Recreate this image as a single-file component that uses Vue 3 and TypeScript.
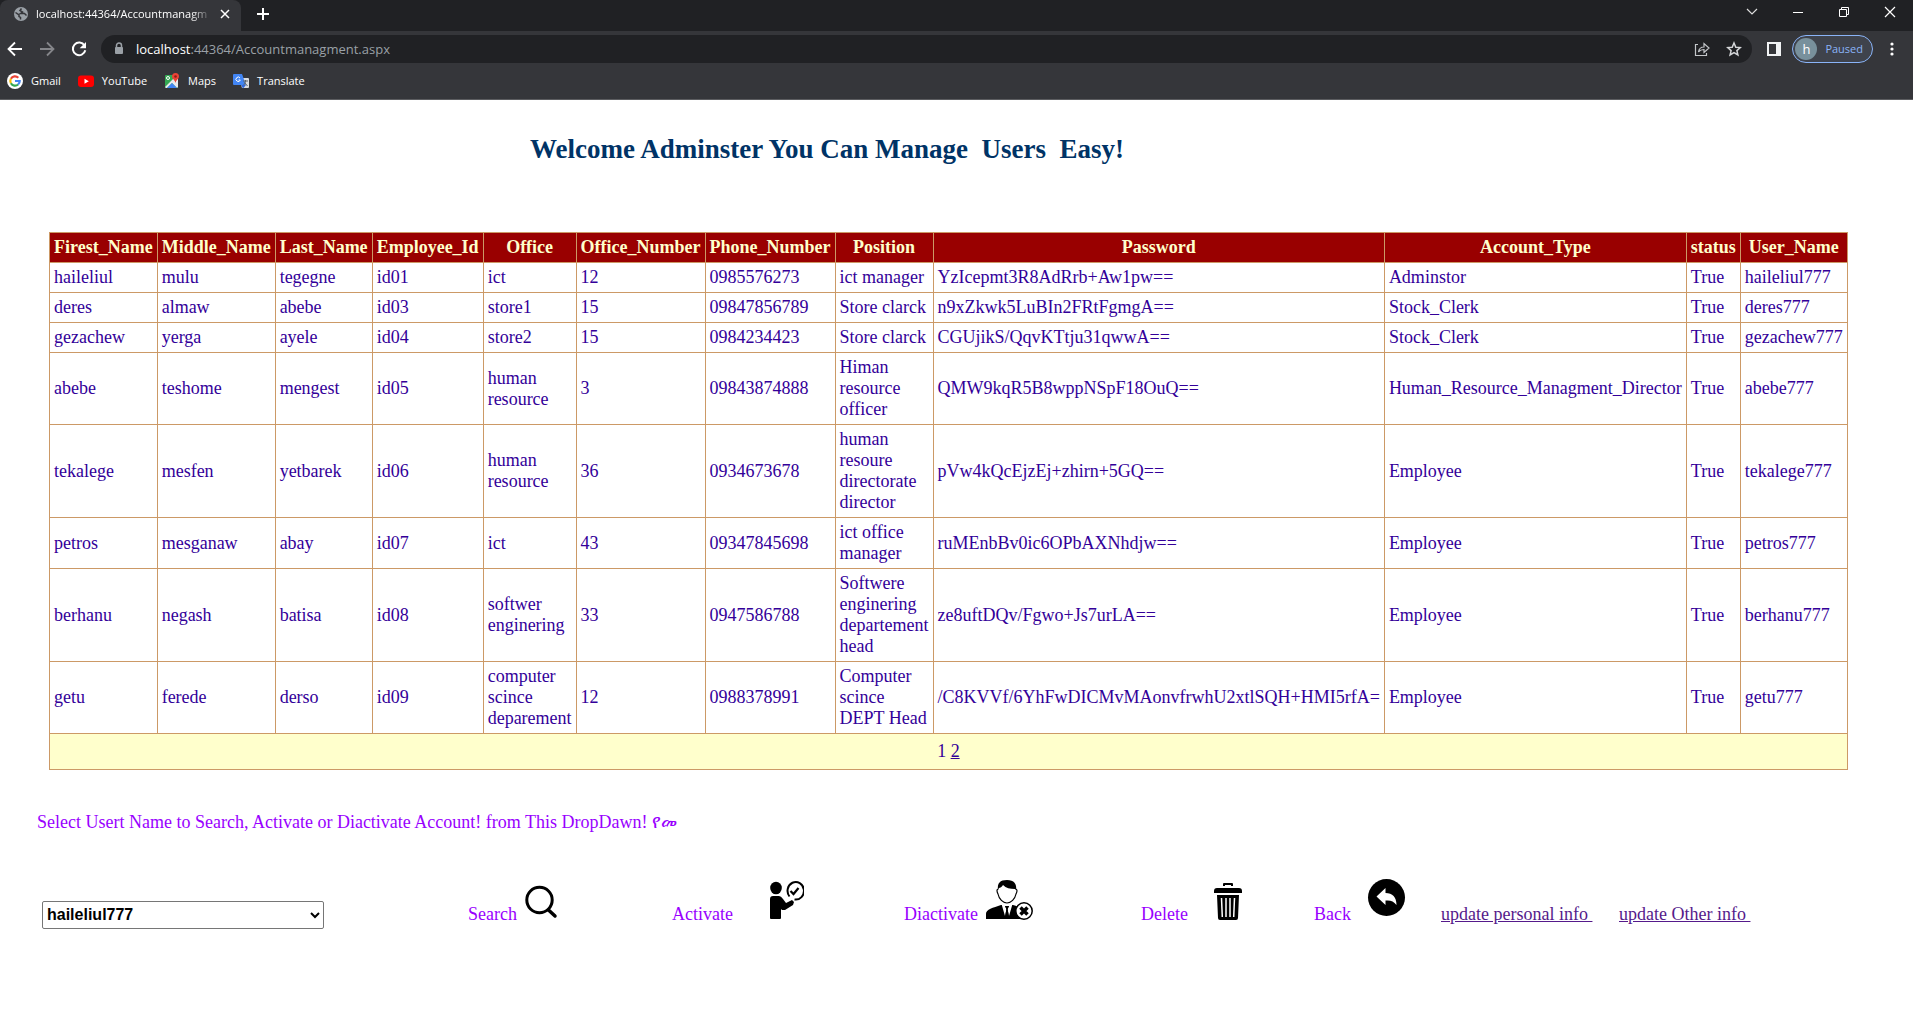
<script setup lang="ts">
import { ref } from 'vue'

interface Account {
  first: string
  middle: string
  last: string
  id: string
  office: string
  officeNo: string
  phone: string
  position: string
  password: string
  type: string
  user: string
}

const headers: string[] = [
  'Firest_Name', 'Middle_Name', 'Last_Name', 'Employee_Id', 'Office', 'Office_Number',
  'Phone_Number', 'Position', 'Password', 'Account_Type', 'status', 'User_Name',
]

const accounts: Account[] = [
  { first: 'haileliul', middle: 'mulu', last: 'tegegne', id: 'id01', office: 'ict', officeNo: '12', phone: '0985576273', position: 'ict manager', password: 'YzIcepmt3R8AdRrb+Aw1pw==', type: 'Adminstor', user: 'haileliul777' },
  { first: 'deres', middle: 'almaw', last: 'abebe', id: 'id03', office: 'store1', officeNo: '15', phone: '09847856789', position: 'Store clarck', password: 'n9xZkwk5LuBIn2FRtFgmgA==', type: 'Stock_Clerk', user: 'deres777' },
  { first: 'gezachew', middle: 'yerga', last: 'ayele', id: 'id04', office: 'store2', officeNo: '15', phone: '0984234423', position: 'Store clarck', password: 'CGUjikS/QqvKTtju31qwwA==', type: 'Stock_Clerk', user: 'gezachew777' },
  { first: 'abebe', middle: 'teshome', last: 'mengest', id: 'id05', office: 'human resource', officeNo: '3', phone: '09843874888', position: 'Himan resource officer', password: 'QMW9kqR5B8wppNSpF18OuQ==', type: 'Human_Resource_Managment_Director', user: 'abebe777' },
  { first: 'tekalege', middle: 'mesfen', last: 'yetbarek', id: 'id06', office: 'human resource', officeNo: '36', phone: '0934673678', position: 'human resoure directorate director', password: 'pVw4kQcEjzEj+zhirn+5GQ==', type: 'Employee', user: 'tekalege777' },
  { first: 'petros', middle: 'mesganaw', last: 'abay', id: 'id07', office: 'ict', officeNo: '43', phone: '09347845698', position: 'ict office manager', password: 'ruMEnbBv0ic6OPbAXNhdjw==', type: 'Employee', user: 'petros777' },
  { first: 'berhanu', middle: 'negash', last: 'batisa', id: 'id08', office: 'softwer enginering', officeNo: '33', phone: '0947586788', position: 'Softwere enginering departement head', password: 'ze8uftDQv/Fgwo+Js7urLA==', type: 'Employee', user: 'berhanu777' },
  { first: 'getu', middle: 'ferede', last: 'derso', id: 'id09', office: 'computer scince deparement', officeNo: '12', phone: '0988378991', position: 'Computer scince DEPT Head', password: '/C8KVVf/6YhFwDICMvMAonvfrwhU2xtlSQH+HMI5rfA=', type: 'Employee', user: 'getu777' },
]

const selectedUser = ref<string>('haileliul777')
const address = ref<string>('localhost:44364/Accountmanagment.aspx')
</script>

<template>
  <div class="window">
    <header class="chrome">
      <div class="tabstrip">
        <div class="tab">
          <svg class="globe" width="14" height="14" viewBox="0 0 14 14" aria-hidden="true">
            <circle cx="7" cy="7" r="7" fill="#9aa0a6" />
            <path d="M1.500 5.500 5 8v1.500l1.500 1v2M7.500 1.500 6 3.500 8.500 5 6.500 6.500h4l2 2" fill="none" stroke="#35363a" stroke-width="1.500" />
          </svg>
          <span class="tab-title">localhost:44364/Accountmanagm</span>
          <button class="icon-btn" aria-label="Close tab">
            <svg width="10" height="10" viewBox="0 0 10 10"><path d="m1 1 8 8M9 1 1 9" stroke="#fff" stroke-width="1.500" /></svg>
          </button>
        </div>
        <button class="icon-btn new-tab" aria-label="New tab">
          <svg width="12" height="12" viewBox="0 0 12 12"><path d="M6 0v12M0 6h12" stroke="#fff" stroke-width="2" /></svg>
        </button>
        <div class="window-buttons">
          <button class="icon-btn" aria-label="Search tabs">
            <svg width="12" height="12" viewBox="0 0 12 12"><path d="m1 3 5 5 5-5" fill="none" stroke="#ddd" stroke-width="1.200" /></svg>
          </button>
          <button class="icon-btn" aria-label="Minimize">
            <svg width="12" height="12" viewBox="0 0 12 12"><path d="M1 6.500h10" stroke="#fff" /></svg>
          </button>
          <button class="icon-btn" aria-label="Restore">
            <svg width="12" height="12" viewBox="0 0 12 12"><path d="M1.500 3.500h7v7h-7zM3.500 3.500v-2h7v7h-2" fill="none" stroke="#fff" /></svg>
          </button>
          <button class="icon-btn" aria-label="Close window">
            <svg width="12" height="12" viewBox="0 0 12 12"><path d="m1 1 10 10M11 1 1 11" stroke="#fff" stroke-width="1.200" /></svg>
          </button>
        </div>
      </div>

      <div class="toolbar">
        <div class="nav">
          <button class="icon-btn" aria-label="Back">
            <svg width="16" height="16" viewBox="0 0 16 16"><path d="M15 8H2M8 1.500 1.500 8 8 14.500" fill="none" stroke="#fff" stroke-width="1.800" /></svg>
          </button>
          <button class="icon-btn" aria-label="Forward">
            <svg width="16" height="16" viewBox="0 0 16 16"><path d="M1 8h13M8 1.500 14.500 8 8 14.500" fill="none" stroke="#85868a" stroke-width="1.800" /></svg>
          </button>
          <button class="icon-btn" aria-label="Reload">
            <svg width="16" height="16" viewBox="0 0 16 16"><path d="M13.500 4.500a6.300 6.300 0 1 0 .8 4.800" fill="none" stroke="#fff" stroke-width="2" /><path d="M15 1v6.300H8.700z" fill="#fff" /></svg>
          </button>
        </div>
        <div class="omnibox">
          <svg width="10" height="14" viewBox="0 0 10 14" aria-hidden="true"><path d="M2.500 6V3.500a2.500 2.500 0 0 1 5 0V6" fill="none" stroke="#9aa0a6" stroke-width="1.500" /><rect x="1" y="5" width="8" height="7" rx="1" fill="#9aa0a6" /></svg>
          <a class="address" :href="'#' + address"><b>localhost</b>:44364/Accountmanagment.aspx</a>
          <button class="icon-btn" aria-label="Share">
            <svg width="16" height="16" viewBox="0 0 16 16"><path d="M4 3.500H1.500v11h11V12M4.500 11c.5-3.500 2.500-5 5.500-5V2.500L15 7l-5 4.500V8.500C7.500 8.500 6 9 4.500 11z" fill="none" stroke="#c4c7ca" stroke-width="1.200" /></svg>
          </button>
          <button class="icon-btn" aria-label="Bookmark this page">
            <svg width="16" height="16" viewBox="0 0 16 16"><path d="m8 2 1.800 4.200 4.500.4-3.400 3 1 4.400L8 11.700 4.100 14l1-4.400-3.400-3 4.500-.4z" fill="none" stroke="#d5d7d9" stroke-width="1.500" /></svg>
          </button>
        </div>
        <button class="icon-btn" aria-label="Side panel">
          <svg width="14" height="14" viewBox="0 0 14 14"><path d="M0 0h14v14H0zM2 2v10h7V2z" fill="#f1f3f4" fill-rule="evenodd" /></svg>
        </button>
        <button class="profile"><span class="avatar">h</span>Paused</button>
        <button class="icon-btn" aria-label="Menu">
          <svg width="4" height="14" viewBox="0 0 4 14"><g fill="#fff"><circle cx="2" cy="2" r="1.600" /><circle cx="2" cy="7" r="1.600" /><circle cx="2" cy="12" r="1.600" /></g></svg>
        </button>
      </div>

      <nav class="bookmarks">
        <a href="#gmail">
          <svg width="16" height="16" viewBox="0 0 16 16"><circle cx="8" cy="8" r="8" fill="#fff" /><g fill="none" stroke-width="2.200"><path d="M11.300 4.700A4.700 4.700 0 0 0 3.900 5.700" stroke="#ea4335" /><path d="M3.900 5.700a4.700 4.700 0 0 0 0 4.600" stroke="#fbbc05" /><path d="M3.900 10.300a4.700 4.700 0 0 0 7.200 1.200" stroke="#34a853" /><path d="M11.100 11.500A4.700 4.700 0 0 0 12.700 8H8" stroke="#4285f4" /></g></svg>
          Gmail
        </a>
        <a href="#youtube">
          <svg width="16" height="16" viewBox="0 0 16 16"><rect y="2.500" width="16" height="11.500" rx="3" fill="#f00" /><path d="m6.500 5.800 4.300 2.500-4.300 2.500z" fill="#fff" /></svg>
          YouTube
        </a>
        <a href="#maps">
          <svg width="16" height="16" viewBox="0 0 16 16"><rect x="1" y="2" width="13" height="13" rx="1" fill="#34a853" /><path d="m1 14 12-12 1 1v11l-1 1-5-5-5 5H2z" fill="#e8eaed" /><path d="m8 10 5 5H3z" fill="#4285f4" /><path d="M11.500 0a3.500 3.500 0 0 0-3.500 3.500C8 6 11 7 11.500 10c.5-3 3.500-4 3.500-6.500A3.500 3.500 0 0 0 11.500 0z" fill="#ea4335" /><circle cx="11.500" cy="3.500" r="1.300" fill="#8c1d18" /><circle cx="4" cy="5" r="1.500" fill="none" stroke="#fff" /></svg>
          Maps
        </a>
        <a href="#translate">
          <svg width="16" height="16" viewBox="0 0 16 16"><path d="M6 5h9a1 1 0 0 1 1 1v8a1 1 0 0 1-1 1H9z" fill="#dadce0" /><path d="M1 1h8l4 11H1a1 1 0 0 1-1-1V2a1 1 0 0 1 1-1z" fill="#4285f4" /><path d="M7 5a2.200 2.200 0 1 0 .3 2H5.500" fill="none" stroke="#fff" /><path d="M10 8h5M12.500 7v1c0 2-1 3-2 4M11.500 9.500l3 3.500" fill="none" stroke="#5f6368" /><path d="M8 12h5l-3 3.500z" fill="#3367d6" /></svg>
          Translate
        </a>
      </nav>
    </header>

    <main>
      <h1>Welcome Adminster You Can Manage&nbsp; Users&nbsp; Easy!</h1>

      <table class="grid">
        <thead>
          <tr><th v-for="h in headers" :key="h" scope="col">{{ h }}</th></tr>
        </thead>
        <tbody>
          <tr v-for="a in accounts" :key="a.id">
            <td>{{ a.first }}</td>
            <td>{{ a.middle }}</td>
            <td>{{ a.last }}</td>
            <td>{{ a.id }}</td>
            <td class="narrow">{{ a.office }}</td>
            <td>{{ a.officeNo }}</td>
            <td>{{ a.phone }}</td>
            <td class="narrow position">{{ a.position }}</td>
            <td>{{ a.password }}</td>
            <td>{{ a.type }}</td>
            <td>True</td>
            <td>{{ a.user }}</td>
          </tr>
        </tbody>
        <tfoot>
          <tr><td :colspan="headers.length"><span>1</span> <a href="#page2">2</a></td></tr>
        </tfoot>
      </table>

      <label class="hint" for="user">Select Usert Name to Search, Activate or Diactivate Account! from This DropDawn! የመ</label>

      <div class="actions">
        <select id="user" v-model="selectedUser">
          <option v-for="a in accounts" :key="a.user">{{ a.user }}</option>
        </select>
        <button class="action">
          Search
          <svg width="36" height="44" viewBox="0 0 36 44"><circle cx="15.500" cy="24" r="12.700" fill="none" stroke="#000" stroke-width="3" /><path d="m24.500 34 6.500 6" stroke="#000" stroke-width="3.500" stroke-linecap="round" /></svg>
        </button>
        <button class="action">
          Activate
          <svg width="64" height="44" viewBox="0 0 64 44">
            <ellipse cx="36" cy="12" rx="5.800" ry="6.300" />
            <path d="M30 42V23q0-3 3-3h6q2 0 4 3l3 4 6-3 2 2-1 3-8 5h-3l-1-1v9q0 1-1 1h-9q-1 0-1-1z" />
            <path d="M49.500 20.500a8.200 8.800 0 1 1 5 3" fill="none" stroke="#000" stroke-width="2" />
            <path d="m50.500 15 3 3 5-6" fill="none" stroke="#000" stroke-width="2.200" />
          </svg>
        </button>
        <button class="action">
          Diactivate
          <svg width="48" height="44" viewBox="0 0 48 44">
            <path d="M13 14C12 7 15 4 22 4s10 4 9 10l-1-1c-5 0-9-1-12-4-1 2-3 3-4 3z" />
            <path d="M13 13q-2 1 0 5c1 5 5 9 9 9s8-4 9-9q2-4 0-5" fill="none" stroke="#000" stroke-width="1.200" />
            <path d="M1 43v-5c0-5 7-6 15-9h12c4 1 8 3 10 5v9z" />
            <path d="m16.500 28 3.500 12 1.500-7-1.500-3h4l-1.500 3 1.500 7L27.500 28z" fill="#fff" />
            <path d="M20 30h4l-1.300 3 1.300 10h-4l1.300-10z" />
            <circle cx="39" cy="35" r="8.200" fill="#fff" stroke="#000" stroke-width="1.500" />
            <path d="m35.500 31.500 7 7m0-7-7 7" stroke="#000" stroke-width="3.500" />
          </svg>
        </button>
        <button class="action">
          Delete
          <svg width="48" height="44" viewBox="0 0 48 44">
            <path d="M28 10V8q0-1 1-1h8q1 0 1 1v2h-2V9h-6v1zM19 17v-2q0-3 3-3h22q3 0 3 3v2z" />
            <path d="M22 19h22l-1 23q0 2-2 2H25q-2 0-2-2z" />
            <path d="m26.500 22 .8 19M31 22v19M35 22v19m4.500-19-.8 19" stroke="#fff" stroke-width="1.500" />
          </svg>
        </button>
        <button class="action">
          Back
          <svg width="48" height="44" viewBox="0 0 48 44">
            <circle cx="28.500" cy="21.500" r="18.500" />
            <path d="m18.500 20.500 9-8.500v5c7 0 11 4 11 12-3-4-6-5-11-4.500v4.500z" fill="#fff" />
          </svg>
        </button>
        <a href="#personal">update personal info&nbsp;</a>
        <a href="#other">update Other info&nbsp;</a>
      </div>
    </main>
  </div>
</template>

<style>
body {
  margin: 0;
  background: #fff;
}
</style>

<style scoped>
.window {
  font-family: "Liberation Serif", "Times New Roman", serif;
  font-size: 18px;
  line-height: 21px;
}

button {
  font: inherit;
  color: inherit;
  border: 0;
  padding: 0;
  background: none;
  cursor: pointer;
}

a {
  color: #551a8b;
}

.chrome {
  background: #35363a;
  border-bottom: 1px solid #5c5d60;
  color: #fff;
  font-family: "Open Sans", "Noto Sans", sans-serif;
  font-size: 11px;
  line-height: 16px;
}

.tabstrip {
  display: flex;
  height: 31px;
  background: #202124;
}

.tab {
  display: flex;
  align-items: center;
  gap: 8px;
  width: 216px;
  padding: 0 11px 3px 14px;
  border-radius: 8px 8px 0 0;
  background: #35363a;
}

.globe {
  flex: none;
}

.tab-title {
  flex: 1;
  white-space: nowrap;
  mask-image: linear-gradient(to right, #000 88%, transparent);
}

.icon-btn {
  display: flex;
  align-items: center;
  justify-content: center;
}

.new-tab {
  margin: 0 16px 3px;
}

.window-buttons {
  display: flex;
  gap: 34px;
  margin: 0 17px 8px auto;
}

.toolbar {
  display: flex;
  align-items: center;
  height: 36px;
  padding: 0 19px 0 7px;
}

.nav {
  display: flex;
  gap: 16px;
  margin-right: 14px;
}

.omnibox {
  display: flex;
  flex: 1;
  align-items: center;
  gap: 16px;
  height: 28px;
  margin-right: 15px;
  padding: 0 10px 0 13px;
  border-radius: 14px;
  background: #202124;
}

.address {
  flex: 1;
  margin-left: -4px;
  color: #9aa0a6;
  font-size: 13px;
  text-decoration: none;
}

.address b {
  color: #fff;
  font-weight: 400;
}

.profile {
  display: flex;
  align-items: center;
  gap: 8px;
  height: 28px;
  margin: 0 17px 0 11px;
  padding: 0 9px 0 2px;
  border: 1px solid #8ab4f8;
  border-radius: 14px;
  background: #3f434c;
  color: #8ab4f8;
}

.avatar {
  width: 22px;
  border-radius: 11px;
  background: #78909c;
  color: #fff;
  font-size: 13px;
  line-height: 22px;
}

.bookmarks {
  display: flex;
  gap: 17px;
  align-items: center;
  height: 28px;
  padding: 0 7px 4px;
}

.bookmarks a {
  display: flex;
  align-items: center;
  gap: 8px;
  color: #fff;
  text-decoration: none;
}

h1 {
  margin: 0 0 67px;
  padding: 34px 0 0 530px;
  color: #036;
  font-size: 27px;
  line-height: 31px;
}

.grid {
  margin-left: 49px;
  border-collapse: collapse;
  color: #309;
}

.grid th,
.grid td {
  padding: 4px;
  border: 1px solid #c96;
  white-space: nowrap;
}

.grid th {
  background: #900;
  color: #ffc;
}

.grid td.narrow {
  width: 1px;
  white-space: normal;
}

.grid td.position {
  min-width: 89px;
}

.grid tfoot td {
  padding: 7px;
  background: #ffc;
  text-align: center;
}

.grid tfoot a {
  color: #309;
}

.hint {
  display: block;
  margin: 42px 0 43px 37px;
  color: #90f;
}

.actions {
  display: grid;
  grid-template-columns: 426fr 204fr 232fr 237fr 173fr 127fr 178fr 294fr;
  align-items: baseline;
  justify-items: start;
  padding: 0 0 32px 42px;
}

.actions select {
  width: 282px;
  height: 28px;
  border: 1px solid #767676;
  border-radius: 2px;
  background: #fff;
  color: #000;
  font: bold 16px "Liberation Sans", Arial, sans-serif;
}

.action {
  display: flex;
  align-items: baseline;
  gap: 7px;
  color: #90f;
}

.action svg {
  fill: #000;
}
</style>
